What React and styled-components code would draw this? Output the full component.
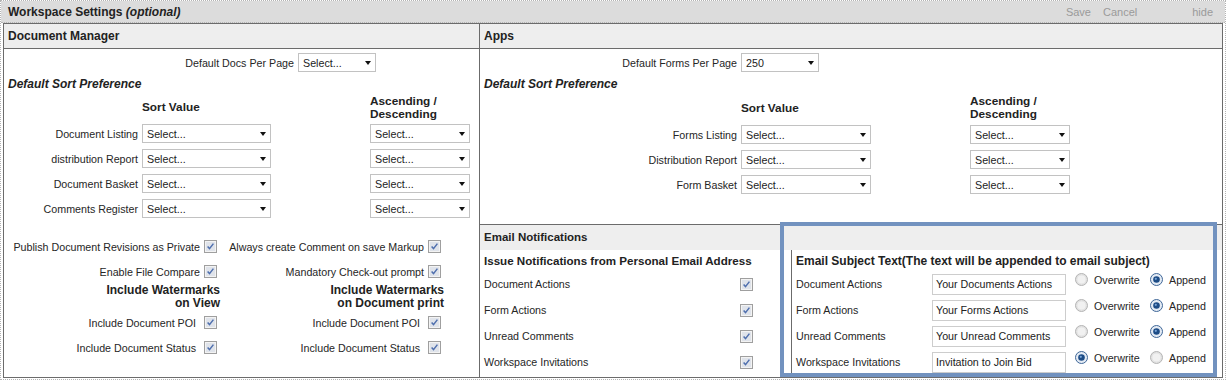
import React from "react";
import styled, { createGlobalStyle } from "styled-components";

//data
const docsSort = [
  "Document Listing",
  "distribution Report",
  "Document Basket",
  "Comments Register",
];
const appsSort = ["Forms Listing", "Distribution Report", "Form Basket"];
const notifications = [
  "Document Actions",
  "Form Actions",
  "Unread Comments",
  "Workspace Invitations",
];
const subjects = [
  { label: "Document Actions", text: "Your Documents Actions", mode: "append" },
  { label: "Form Actions", text: "Your Forms Actions", mode: "append" },
  { label: "Unread Comments", text: "Your Unread Comments", mode: "append" },
  { label: "Workspace Invitations", text: "Invitation to Join Bid", mode: "overwrite" },
];

//small controls
const Select = ({ width, value = "Select..." }) => (
  <SelectBox $width={width}>
    <span>{value}</span>
    <Caret />
  </SelectBox>
);

const CheckBox = ({ gap = 4 }) => (
  <CheckSvg $gap={gap} width="13" height="13" viewBox="0 0 13 13">
    <rect x="0.5" y="0.5" width="12" height="12" fill="#f3f3f3" stroke="#9f9f9f" />
    <rect x="2" y="2" width="9" height="9" fill="#dfe3ea" />
    <path d="M3.6 6.6 L5.5 8.6 L9.4 3.6" fill="none" stroke="#4f6fae" strokeWidth="1.5" />
  </CheckSvg>
);

const Radio = ({ checked }) => (
  <svg width="13" height="13" viewBox="0 0 13 13">
    {checked ? (
      <>
        <circle cx="6.5" cy="6.5" r="6" fill="#e4ebf4" stroke="#3f6797" />
        <circle cx="6.5" cy="6.5" r="3.3" fill="#1d4c86" />
        <circle cx="5.8" cy="5.8" r="1.1" fill="#7aa6d8" />
      </>
    ) : (
      <>
        <circle cx="6.5" cy="6.5" r="6" fill="#e2e2e2" stroke="#b4b4b4" />
        <circle cx="6.5" cy="6.5" r="4" fill="#f1f1f1" />
      </>
    )}
  </svg>
);

const SortSection = ({ perPageLabel, perPageValue, rows, label, value, lower }) => (
  <>
    <PerPageRow $label={label === 138 ? 294 : label}>
      <Label>{perPageLabel}</Label>
      <Select width={78} value={perPageValue} />
    </PerPageRow>
    <SectionTitle>Default Sort Preference</SectionTitle>
    <SortGrid $label={label} $value={value}>
      <SortHead $lower={lower}>
        <span />
        <HeadText>Sort Value</HeadText>
        <HeadText>
          Ascending /<br />
          Descending
        </HeadText>
      </SortHead>
      {rows.map((row) => (
        <SortRow key={row}>
          <Label>{row}</Label>
          <Select width={value === 228 ? 129 : 130} />
          <Select width={100} />
        </SortRow>
      ))}
    </SortGrid>
  </>
);

const App = () => {
  return (
    <>
      <GlobalStyle />
      <Frame>
        <TitleBar>
          <Title>
            Workspace Settings <em>(optional)</em>
          </Title>
          <Actions>
            <ActionLink>Save</ActionLink>
            <ActionLink $space={12}>Cancel</ActionLink>
            <ActionLink $space={55}>hide</ActionLink>
          </Actions>
        </TitleBar>
        <Content>
          <Panels>
            <LeftColumn>
              <PanelHeader>Document Manager</PanelHeader>
              <LeftBody>
                <SortSection
                  perPageLabel="Default Docs Per Page"
                  rows={docsSort}
                  label={138}
                  value={228}
                />
                <CheckGrid>
                  <CheckCell>
                    Publish Document Revisions as Private <CheckBox />
                  </CheckCell>
                  <CheckCell>
                    Always create Comment on save Markup <CheckBox />
                  </CheckCell>
                  <CheckCell>
                    Enable File Compare <CheckBox />
                  </CheckCell>
                  <CheckCell>
                    Mandatory Check-out prompt <CheckBox />
                  </CheckCell>
                  <WatermarkHead>
                    Include Watermarks
                    <br />
                    on View
                  </WatermarkHead>
                  <WatermarkHead>
                    Include Watermarks
                    <br />
                    on Document print
                  </WatermarkHead>
                  <CheckCell>
                    Include Document POI <CheckBox gap={8} />
                  </CheckCell>
                  <CheckCell>
                    Include Document POI <CheckBox gap={8} />
                  </CheckCell>
                  <CheckCell>
                    Include Document Status <CheckBox gap={8} />
                  </CheckCell>
                  <CheckCell>
                    Include Document Status <CheckBox gap={8} />
                  </CheckCell>
                </CheckGrid>
              </LeftBody>
            </LeftColumn>
            <RightColumn>
              <PanelHeader>Apps</PanelHeader>
              <AppsBody>
                <SortSection
                  perPageLabel="Default Forms Per Page"
                  perPageValue="250"
                  rows={appsSort}
                  label={261}
                  value={229}
                  lower
                />
              </AppsBody>
              <EmailSection>
                <EmailHeader>Email Notifications</EmailHeader>
                <EmailBody>
                  <NotifyColumn>
                    <SubTitle $size={11.6}>
                      Issue Notifications from Personal Email Address
                    </SubTitle>
                    {notifications.map((item) => (
                      <NotifyRow key={item}>
                        <span>{item}</span>
                        <CheckBox gap={0} />
                      </NotifyRow>
                    ))}
                  </NotifyColumn>
                  <SubjectColumn>
                    <SubTitle $size={12}>
                      Email Subject Text(The text will be appended to email subject)
                    </SubTitle>
                    {subjects.map((item) => (
                      <SubjectRow key={item.label}>
                        <SubjectLabel>{item.label}</SubjectLabel>
                        <TextInput>{item.text}</TextInput>
                        <RadioGroup>
                          <RadioOption>
                            <Radio checked={item.mode === "overwrite"} />
                            <OptionText>Overwrite</OptionText>
                          </RadioOption>
                          <RadioOption>
                            <Radio checked={item.mode === "append"} />
                            Append
                          </RadioOption>
                        </RadioGroup>
                      </SubjectRow>
                    ))}
                  </SubjectColumn>
                </EmailBody>
                <Highlight />
              </EmailSection>
            </RightColumn>
          </Panels>
        </Content>
      </Frame>
    </>
  );
};

const GlobalStyle = createGlobalStyle`
  body {
    margin: 0;
    background: #fff;
    font-family: "Liberation Sans", Arial, sans-serif;
    font-size: 10.7px;
    color: #262626;
  }
`;

const Frame = styled.div`
  width: 1226px;
  box-sizing: border-box;
  border: 1px dotted #b4b4b4;
`;

const TitleBar = styled.div`
  height: 21px;
  background: #dcdcdc;
  border-bottom: 1px dotted #b4b4b4;
  display: flex;
  align-items: center;
  justify-content: space-between;
  padding: 0 12px 0 7px;
`;

const Title = styled.div`
  font-size: 12px;
  font-weight: bold;
  color: #222;
`;

const Actions = styled.div`
  display: flex;
  font-size: 11px;
  color: #9a9a9a;
`;

const ActionLink = styled.span`
  margin-left: ${(p) => p.$space || 0}px;
`;

const Content = styled.div`
  padding: 0 2px 1px;
`;

const Panels = styled.div`
  display: grid;
  grid-template-columns: 476px 742px;
  border: 1px solid #6b6b6b;
`;

const LeftColumn = styled.div`
  border-right: 1px solid #6b6b6b;
`;

const RightColumn = styled.div`
  display: flex;
  flex-direction: column;
`;

const PanelHeader = styled.div`
  height: 24px;
  line-height: 24px;
  background: #eeeeee;
  border-bottom: 1px solid #6b6b6b;
  padding-left: 4px;
  font-size: 12px;
  font-weight: bold;
  color: #222;
`;

const LeftBody = styled.div`
  padding: 4px 0 17px;
`;

const AppsBody = styled.div`
  flex: 1;
  padding-top: 4px;
`;

const PerPageRow = styled.div`
  display: grid;
  grid-template-columns: ${(p) => p.$label}px 78px;
  height: 19px;
  align-items: center;
`;

const Label = styled.span`
  text-align: right;
  padding-right: 4px;
  white-space: nowrap;
`;

const SectionTitle = styled.div`
  margin: 5px 0 0 4px;
  line-height: 14px;
  font-size: 12px;
  font-weight: bold;
  font-style: italic;
  color: #222;
`;

const SortGrid = styled.div`
  margin-top: 3px;
  display: grid;
  grid-template-columns: ${(p) => p.$label}px ${(p) => p.$value}px 100px;
`;

const SortHead = styled.div`
  display: contents;
  & > * {
    height: ${(p) => (p.$lower ? 28 : 27)}px;
  }
`;

const HeadText = styled.div`
  display: flex;
  align-items: center;
  line-height: 13px;
  font-size: 11.8px;
  font-weight: bold;
  color: #222;
`;

const SortRow = styled.div`
  display: contents;
  & > * {
    margin: 3px 0;
  }
  & > span {
    align-self: center;
  }
`;

const SelectBox = styled.div`
  width: ${(p) => p.$width}px;
  height: 19px;
  box-sizing: border-box;
  border: 1px solid #c2c2c2;
  background: #fff;
  display: flex;
  align-items: center;
  justify-content: space-between;
  padding: 0 4px 0 4px;
  color: #222;
`;

const Caret = styled.span`
  width: 0;
  height: 0;
  border-left: 3.5px solid transparent;
  border-right: 3.5px solid transparent;
  border-top: 4px solid #111;
`;

const CheckGrid = styled.div`
  margin-top: 13px;
  display: grid;
  grid-template-columns: 217px 224px;
`;

const CheckCell = styled.div`
  height: 25px;
  display: flex;
  align-items: center;
  justify-content: flex-end;
  padding-right: 4px;
  white-space: nowrap;
`;

const CheckSvg = styled.svg`
  flex: none;
  margin-left: ${(p) => p.$gap}px;
`;

const WatermarkHead = styled.div`
  height: 26px;
  line-height: 13px;
  text-align: right;
  padding-right: 1px;
  font-size: 12px;
  font-weight: bold;
  color: #222;
`;

const EmailSection = styled.div`
  position: relative;
  border-top: 1px solid #6b6b6b;
`;

const EmailHeader = styled.div`
  height: 25px;
  line-height: 25px;
  background: #eeeeee;
  padding-left: 4px;
  font-size: 11.5px;
  font-weight: bold;
  color: #222;
`;

const EmailBody = styled.div`
  height: 127px;
  display: grid;
  grid-template-columns: 311px 1fr;
`;

const NotifyColumn = styled.div`
  padding: 4px 0 0 4px;
`;

const SubjectColumn = styled.div`
  border-left: 1px solid #6b6b6b;
  padding: 4px 0 0 4px;
`;

const SubTitle = styled.div`
  line-height: 14px;
  margin-bottom: 3px;
  font-size: ${(p) => p.$size}px;
  font-weight: bold;
  color: #222;
  white-space: nowrap;
`;

const NotifyRow = styled.div`
  height: 26px;
  display: grid;
  grid-template-columns: 256px 13px;
  align-items: center;
`;

const SubjectRow = styled.div`
  height: 26px;
  display: flex;
  align-items: flex-start;
`;

const SubjectLabel = styled.span`
  width: 136px;
  line-height: 26px;
`;

const TextInput = styled.div`
  width: 134px;
  height: 21px;
  margin-top: 3px;
  box-sizing: border-box;
  border: 1px solid #cdcdcd;
  padding-left: 3px;
  line-height: 19px;
  color: #222;
`;

const RadioGroup = styled.div`
  display: flex;
  align-items: center;
  height: 13px;
  margin: 2px 0 0 9px;
`;

const RadioOption = styled.label`
  display: flex;
  align-items: center;
  gap: 6px;
  & + & {
    margin-left: 8px;
  }
`;

const OptionText = styled.span`
  width: 48px;
`;

const Highlight = styled.div`
  position: absolute;
  left: 300px;
  top: -3px;
  width: 437px;
  height: 155px;
  box-sizing: border-box;
  border: 4px solid #7292bf;
  pointer-events: none;
`;

export default App;
